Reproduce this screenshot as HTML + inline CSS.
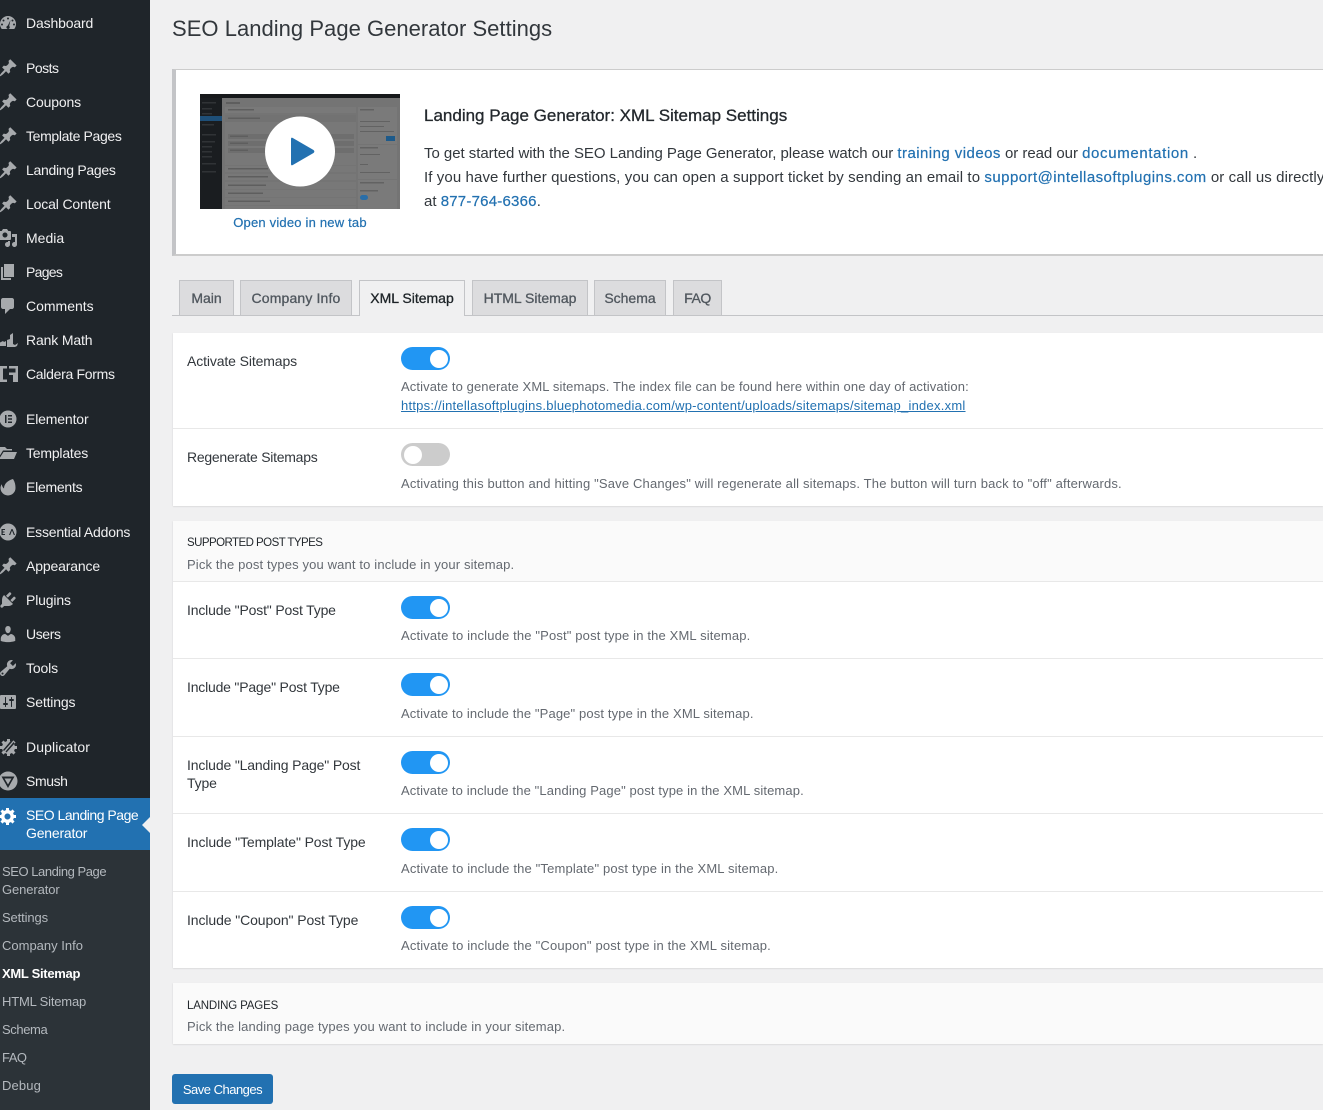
<!DOCTYPE html>
<html lang="en"><head><meta charset="utf-8"><title>SEO Landing Page Generator Settings</title>
<style>
html,body{margin:0;padding:0;width:1323px;height:1110px;overflow:hidden;background:#f0f0f1}
body{position:relative;font-family:"Liberation Sans",sans-serif;font-size:14px;color:#32373c}
.a,.t,.m,.s,.d,.l{position:absolute;white-space:nowrap}
a{color:#2271b1;text-decoration:none}
#side{position:absolute;left:0;top:0;width:150px;height:1110px;background:#1f252a;overflow:hidden}
#sub{position:absolute;left:0;top:850px;width:150px;height:260px;background:#2c3338}
#act{position:absolute;left:0;top:798px;width:150px;height:52px;background:#2271b1}
#act:after{content:"";position:absolute;right:0;top:19px;border:8px solid transparent;border-right-color:#f0f0f1;border-left:0}
.m{left:26px;height:20px;line-height:20px;color:#f0f0f1;font-size:14px;letter-spacing:-.15px}
.s{left:2px;height:18px;line-height:18px;color:#b4b9be;font-size:13px;letter-spacing:-.12px}
#side svg{position:absolute;left:-2px;width:20px;height:20px;fill:#a7aaad}
.card{position:absolute;left:173px;width:1150px;background:#fff;box-shadow:0 1px 1px rgba(0,0,0,.08),-1px 0 1px rgba(0,0,0,.03)}
.hd{background:#fafafa}
.hr{position:absolute;left:173px;width:1150px;height:1px;background:#e8e8e8}
.tab{position:absolute;top:280px;height:35px;box-sizing:border-box;background:#dcdcde;border:1px solid #c3c4c7;border-bottom:0;text-align:center;line-height:35px;color:#50575e;font-size:14px}
.tab span{-webkit-text-stroke:.3px currentColor}
.tab.on{background:#f0f0f1;color:#1d2327;height:36px}
.l{left:187px;height:18px;line-height:18px;color:#32373c;font-size:14px;letter-spacing:-.15px}
.d{left:401px;height:18px;line-height:18px;color:#646970;font-size:13px;letter-spacing:.15px}
.tg{position:absolute;left:401px;width:49px;height:23px;border-radius:12px;background:#2196f3}
.tg:after{content:"";position:absolute;left:29px;top:2.5px;width:18px;height:18px;border-radius:50%;background:#fff}
.tg.off{background:#ccc}
.tg.off:after{left:2.5px}
.p{position:absolute;left:424px;height:24px;line-height:24px;font-size:15px;color:#32373c;white-space:nowrap}
.p a{-webkit-text-stroke:.2px #2271b1;letter-spacing:.45px}
.sec{position:absolute;left:187px;height:18px;line-height:18px;font-size:11.5px;color:#23282d;white-space:nowrap}
</style></head><body>

<div id="side">
<svg style="top:13px" viewBox="0 0 20 20"><path fill-rule="evenodd" d="M3.760 16h12.480A8 8 0 0 0 18 11a8 8 0 0 0-16 0 8 8 0 0 0 1.760 5zM10 4.500a1 1 0 1 1 0 2 1 1 0 0 1 0-2zM5.500 6.500a1 1 0 1 1 0 2 1 1 0 0 1 0-2zM14.500 6.500a1 1 0 1 1 0 2 1 1 0 0 1 0-2zM4 10.500a1 1 0 1 1 0 2 1 1 0 0 1 0-2zM16 10.500a1 1 0 1 1 0 2 1 1 0 0 1 0-2zM12.500 7l-1.300 6a1.700 1.700 0 1 1-1.400-.4z"/></svg>
<div class="m" style="top:13px">Dashboard</div>
<svg style="top:58px" viewBox="0 0 20 20"><path d="M10.440 3.020l1.820-1.820 6.360 6.350-1.830 1.820c-1.050-.68-2.480-.57-3.410.36l-.75.75c-.92.93-1.040 2.350-.35 3.410l-1.830 1.820-2.410-2.410-2.800 2.790c-.42.42-3.380 2.710-3.800 2.290s1.860-3.390 2.280-3.810l2.790-2.790L4.100 9.360l1.830-1.820c1.050.69 2.480.57 3.400-.36l.75-.75c.93-.92 1.050-2.350.36-3.410z"/></svg>
<div class="m" style="top:58px;letter-spacing:-.5px">Posts</div>
<svg style="top:92px" viewBox="0 0 20 20"><path d="M10.440 3.020l1.820-1.820 6.360 6.350-1.830 1.820c-1.050-.68-2.480-.57-3.410.36l-.75.75c-.92.93-1.040 2.350-.35 3.410l-1.830 1.820-2.410-2.410-2.800 2.790c-.42.42-3.380 2.710-3.800 2.290s1.860-3.390 2.280-3.810l2.790-2.790L4.100 9.360l1.830-1.820c1.050.69 2.480.57 3.400-.36l.75-.75c.93-.92 1.050-2.350.36-3.410z"/></svg>
<div class="m" style="top:92px">Coupons</div>
<svg style="top:126px" viewBox="0 0 20 20"><path d="M10.440 3.020l1.820-1.820 6.360 6.350-1.830 1.820c-1.050-.68-2.480-.57-3.410.36l-.75.75c-.92.93-1.040 2.350-.35 3.410l-1.830 1.820-2.410-2.410-2.800 2.790c-.42.42-3.380 2.710-3.800 2.290s1.860-3.390 2.280-3.810l2.790-2.790L4.100 9.360l1.830-1.820c1.050.69 2.480.57 3.400-.36l.75-.75c.93-.92 1.050-2.350.36-3.410z"/></svg>
<div class="m" style="top:126px;letter-spacing:-.35px">Template Pages</div>
<svg style="top:160px" viewBox="0 0 20 20"><path d="M10.440 3.020l1.820-1.820 6.360 6.350-1.830 1.820c-1.050-.68-2.480-.57-3.410.36l-.75.75c-.92.93-1.040 2.350-.35 3.410l-1.830 1.820-2.410-2.410-2.800 2.790c-.42.42-3.380 2.710-3.800 2.290s1.860-3.390 2.280-3.810l2.790-2.790L4.100 9.360l1.830-1.820c1.050.69 2.480.57 3.400-.36l.75-.75c.93-.92 1.050-2.350.36-3.410z"/></svg>
<div class="m" style="top:160px;letter-spacing:-.3px">Landing Pages</div>
<svg style="top:194px" viewBox="0 0 20 20"><path d="M10.440 3.020l1.820-1.820 6.360 6.350-1.830 1.820c-1.050-.68-2.480-.57-3.410.36l-.75.75c-.92.93-1.040 2.350-.35 3.410l-1.830 1.820-2.410-2.410-2.800 2.790c-.42.42-3.380 2.710-3.800 2.290s1.860-3.390 2.280-3.810l2.790-2.790L4.100 9.360l1.830-1.820c1.050.69 2.480.57 3.400-.36l.75-.75c.93-.92 1.050-2.350.36-3.410z"/></svg>
<div class="m" style="top:194px">Local Content</div>
<svg style="top:228px" viewBox="0 0 20 20"><path fill-rule="evenodd" d="M13 11V4c0-.55-.45-1-1-1h-1.670L9 1H5L3.670 3H2c-.55 0-1 .45-1 1v7c0 .55.45 1 1 1h10c.55 0 1-.45 1-1zM7 4.500c1.380 0 2.500 1.120 2.500 2.500S8.380 9.500 7 9.500 4.500 8.380 4.500 7 5.620 4.500 7 4.500zM14 6h5v10.500c0 1.380-1.120 2.500-2.500 2.500S14 17.880 14 16.500s1.120-2.500 2.500-2.500c.17 0 .34.020.5.050V9h-3V6zm-4 8.050V13h2v3.500c0 1.380-1.120 2.500-2.500 2.500S7 17.880 7 16.500 8.120 14 9.500 14c.17 0 .34.020.5.050z"/></svg>
<div class="m" style="top:228px;letter-spacing:0">Media</div>
<svg style="top:262px" viewBox="0 0 20 20"><path d="M6 15V2h10v13H6zm-1 1h8v2H3V5h2v11z"/></svg>
<div class="m" style="top:262px;letter-spacing:-.7px">Pages</div>
<svg style="top:296px" viewBox="0 0 20 20"><path d="M5 2h9c1.100 0 2 .9 2 2v7c0 1.100-.9 2-2 2h-2l-5 5v-5H5c-1.100 0-2-.9-2-2V4c0-1.100.9-2 2-2z"/></svg>
<div class="m" style="top:296px;letter-spacing:0">Comments</div>
<svg style="top:330px" viewBox="0 0 20 20"><path d="M1 13l4-2 1 1 2-1v5H1zM9 10l3-1V5l3-2v11l2 1 3-2-1 3-2 1H9z"/></svg>
<div class="m" style="top:330px">Rank Math</div>
<svg style="top:364px;left:0" viewBox="0 0 20 20"><path d="M0 2h7v2.500H3v11h4V18H0zM9 2h9v16h-5v-7H9V8.500h6.500v-4H9z" fill-rule="evenodd"/></svg>
<div class="m" style="top:364px;letter-spacing:-.3px">Caldera Forms</div>
<svg style="top:409px" viewBox="0 0 20 20"><path fill-rule="evenodd" d="M10 1.500a8.500 8.500 0 1 0 0 17 8.500 8.500 0 0 0 0-17zM7 6h1.500v8H7zM10 6h4v1.500h-4zM10 9.250h4v1.500h-4zM10 12.500h4V14h-4z"/></svg>
<div class="m" style="top:409px">Elementor</div>
<svg style="top:443px" viewBox="0 0 20 20"><path d="M1 4h6l2 2h5v1.500H5L1 14zM5.500 9H19l-3 7H1z"/></svg>
<div class="m" style="top:443px;letter-spacing:-.2px">Templates</div>
<svg style="top:477px" viewBox="0 0 20 20"><path d="M15 2c2 3 2.500 6 2.500 9a7.500 7.500 0 0 1-15 0c0-1.500.5-2.800 1.300-3.800.2 2 1 3.300 2.200 4.300C6 7 9.500 3.500 15 2z"/></svg>
<div class="m" style="top:477px;letter-spacing:-.25px">Elements</div>
<svg style="top:522px" viewBox="0 0 20 20"><path fill-rule="evenodd" d="M10 1.500a8.500 8.500 0 1 0 0 17 8.500 8.500 0 0 0 0-17zM3.500 7H7v1H4.700v1.500H6.500v1H4.700V12H7v1H3.500zM11 13l2.500-6h1l2.500 6h-1.200l-1.800-4.500-1.800 4.500z"/></svg>
<div class="m" style="top:522px;letter-spacing:-.2px">Essential Addons</div>
<svg style="top:556px" viewBox="0 0 20 20"><path d="M10.440 3.020l1.820-1.820 6.360 6.350-1.830 1.820c-1.050-.68-2.480-.57-3.410.36l-.75.75c-.92.93-1.040 2.350-.35 3.410l-1.830 1.820-2.410-2.410-2.800 2.790c-.42.42-3.380 2.710-3.800 2.290s1.860-3.390 2.280-3.810l2.790-2.790L4.100 9.360l1.830-1.820c1.050.69 2.480.57 3.400-.36l.75-.75c.93-.92 1.050-2.350.36-3.410z"/></svg>
<div class="m" style="top:556px">Appearance</div>
<svg style="top:590px" viewBox="0 0 20 20"><path d="M13.110 4.360L9.870 7.600 8 5.730l3.240-3.240c.35-.34 1.050-.2 1.560.32.52.51.66 1.210.31 1.550zm-8 1.770l.91-1.120 9.010 9.010-1.190.84c-.71.71-2.630 1.160-3.820 1.160H6.140L4.900 17.260c-.59.59-1.540.59-2.120 0-.59-.58-.59-1.530 0-2.120l1.240-1.240v-3.880c0-1.130.4-3.190 1.090-3.890zm7.260 3.970l3.240-3.240c.34-.35 1.040-.21 1.550.31.52.51.66 1.210.31 1.550l-3.240 3.250z"/></svg>
<div class="m" style="top:590px">Plugins</div>
<svg style="top:624px" viewBox="0 0 20 20"><path d="M10 9.250c-2.270 0-2.730-3.440-2.730-3.440C7 4.020 7.820 2 9.970 2c2.160 0 2.980 2.020 2.710 3.810 0 0-.41 3.440-2.680 3.440zm0 2.570L12.720 10c2.390 0 4.520 2.330 4.520 4.530v2.490s-3.650 1.130-7.240 1.130c-3.650 0-7.240-1.130-7.240-1.130v-2.490c0-2.250 1.940-4.480 4.470-4.480z"/></svg>
<div class="m" style="top:624px;letter-spacing:-.4px">Users</div>
<svg style="top:658px" viewBox="0 0 20 20"><path fill-rule="evenodd" d="M16.680 9.770c-1.340 1.340-3.300 1.670-4.950.99l-5.410 6.520c-.99.99-2.590.99-3.580 0s-.99-2.590 0-3.570l6.520-5.420c-.68-1.650-.35-3.610.99-4.950 1.280-1.280 3.120-1.620 4.720-1.060l-2.890 2.890 2.820 2.820 2.860-2.870c.53 1.580.18 3.390-1.080 4.650zM3.810 16.210c.4.39 1.040.39 1.430 0 .4-.4.4-1.040 0-1.430-.39-.4-1.030-.4-1.430 0-.39.39-.39 1.030 0 1.430z"/></svg>
<div class="m" style="top:658px">Tools</div>
<svg style="top:692px" viewBox="0 0 20 20"><path fill-rule="evenodd" d="M18 16V4c0-.55-.45-1-1-1H3c-.55 0-1 .45-1 1v12c0 .55.45 1 1 1h14c.55 0 1-.45 1-1zM8 11h1c.55 0 1 .45 1 1s-.45 1-1 1H8v1.500c0 .28-.22.5-.5.5s-.5-.22-.5-.5V13H6c-.55 0-1-.45-1-1s.45-1 1-1h1V5.500c0-.28.22-.5.5-.5s.5.22.5.5V11zm5-2h-1c-.55 0-1-.45-1-1s.45-1 1-1h1V5.500c0-.28.22-.5.5-.5s.5.22.5.5V7h1c.55 0 1 .45 1 1s-.45 1-1 1h-1v5.500c0 .28-.22.5-.5.5s-.5-.22-.5-.5V9z"/></svg>
<div class="m" style="top:692px">Settings</div>
<svg style="top:737px;left:-1px" viewBox="0 0 20 20"><path fill-rule="evenodd" d="M18 12h-2.180c-.17.7-.44 1.350-.81 1.930l1.540 1.540-2.100 2.100-1.540-1.540c-.58.36-1.230.63-1.910.79V19H8v-2.180c-.68-.16-1.330-.43-1.910-.79l-1.540 1.540-2.120-2.120 1.540-1.540c-.36-.58-.63-1.230-.79-1.910H1V9.030h2.170c.16-.7.44-1.350.8-1.940L2.430 5.550l2.100-2.100 1.540 1.540c.58-.37 1.240-.64 1.930-.81V2h3v2.180c.68.16 1.330.43 1.910.79l1.540-1.540 2.120 2.120-1.540 1.540c.36.59.64 1.240.8 1.940H18V12zM5 14l8-9-1.500-.8L4 13zM7.500 15.500l8-9-.8-1.500-8.200 9.500z"/></svg>
<div class="m" style="top:737px;letter-spacing:.1px">Duplicator</div>
<svg style="top:771px;left:-2px" viewBox="0 0 20 20"><path fill-rule="evenodd" d="M10 .5a9.500 9.500 0 1 0 0 19 9.500 9.500 0 0 0 0-19zM3.500 5.500h13L10 17zM6.500 7.500l3.500 6 3.500-6z"/></svg>
<div class="m" style="top:771px;letter-spacing:-.4px">Smush</div>
<div id="act">
<svg style="top:8px;left:-2px;fill:#fff" viewBox="0 0 20 20"><path fill-rule="evenodd" d="M18 12h-2.180c-.17.7-.44 1.350-.81 1.930l1.540 1.540-2.100 2.100-1.540-1.540c-.58.36-1.230.63-1.910.79V19H8v-2.180c-.68-.16-1.330-.43-1.910-.79l-1.540 1.540-2.120-2.120 1.540-1.540c-.36-.58-.63-1.230-.79-1.910H1V9.030h2.170c.16-.7.44-1.350.8-1.940L2.430 5.550l2.100-2.100 1.540 1.540c.58-.37 1.240-.64 1.930-.81V2h3v2.180c.68.16 1.330.43 1.910.79l1.540-1.540 2.120 2.120-1.540 1.540c.36.59.64 1.240.8 1.940H18V12zm-8.500 1.500c1.660 0 3-1.340 3-3s-1.340-3-3-3-3 1.340-3 3 1.340 3 3 3z"/></svg>
<div class="m" style="top:8px;color:#fff;line-height:18px;height:36px;letter-spacing:-.48px">SEO Landing Page<br><span style="letter-spacing:-.2px">Generator</span></div>
</div>
<div id="sub">
<div class="s" style="top:13px;letter-spacing:-.45px">SEO Landing Page<br><span style="letter-spacing:-.1px">Generator</span></div>
<div class="s" style="top:59px">Settings</div>
<div class="s" style="top:87px;letter-spacing:0">Company Info</div>
<div class="s" style="top:115px;color:#fff;font-weight:bold;letter-spacing:-.3px">XML Sitemap</div>
<div class="s" style="top:143px;letter-spacing:-.18px">HTML Sitemap</div>
<div class="s" style="top:171px;letter-spacing:-.4px">Schema</div>
<div class="s" style="top:199px;letter-spacing:-.5px">FAQ</div>
<div class="s" style="top:227px;letter-spacing:.15px">Debug</div>
</div>
</div>

<div class="t" style="left:172px;top:14px;font-size:22px;line-height:30px;color:#32373c;letter-spacing:.03px">SEO Landing Page Generator Settings</div>

<div class="a" style="left:172px;top:69px;width:1151px;height:187px;box-sizing:border-box;background:#fff;border-left:4px solid #c3c4c7;border-top:1px solid #ccc;border-bottom:2px solid #ccc"></div>

<svg class="a" style="left:200px;top:94px" width="200" height="115" viewBox="0 0 200 115">
<rect width="200" height="115" fill="#747474"/><rect width="200" height="4" fill="#17191b"/><rect y="4" width="22" height="111" fill="#1a1d20"/>
<rect y="22" width="22" height="5" fill="#1e4f78"/>
<g fill="#303336"><rect x="2" y="8" width="14" height="1.500"/><rect x="2" y="14" width="10" height="1.500"/><rect x="2" y="19" width="10" height="1.500"/><rect x="2" y="30" width="12" height="1.500"/><rect x="2" y="40" width="14" height="1.500"/><rect x="2" y="47" width="13" height="1.500"/><rect x="2" y="52" width="10" height="1.500"/><rect x="2" y="57" width="10" height="1.500"/><rect x="2" y="62" width="10" height="1.500"/><rect x="2" y="69" width="14" height="1.500"/><rect x="2" y="77" width="14" height="1.500"/></g>
<rect x="25" y="13" width="131" height="6" fill="#797979"/>
<rect x="25" y="21" width="131" height="50" fill="#787878"/>
<rect x="25" y="21" width="131" height="7" fill="#727272"/>
<rect x="28" y="40" width="126" height="5" fill="#6e6e6e"/><rect x="28" y="47" width="126" height="5" fill="#6e6e6e"/><rect x="28" y="54" width="126" height="5" fill="#6e6e6e"/>
<g fill="#787878"><rect x="25" y="72" width="131" height="6"/><rect x="25" y="80" width="131" height="6"/><rect x="25" y="88" width="131" height="7"/><rect x="25" y="96" width="131" height="7"/><rect x="25" y="104" width="131" height="7"/><rect x="25" y="112" width="131" height="3"/></g>
<g fill="#5e5e5e"><rect x="28" y="23.500" width="32" height="1.500"/><rect x="28" y="74" width="40" height="1.500"/><rect x="28" y="82" width="40" height="1.500"/><rect x="28" y="90.500" width="38" height="1.500"/><rect x="28" y="98.500" width="35" height="1.500"/><rect x="28" y="106.500" width="42" height="1.500"/><rect x="26" y="8" width="14" height="2"/><rect x="28" y="15" width="26" height="1.500"/><rect x="30" y="41.500" width="18" height="1.500"/><rect x="30" y="48.500" width="18" height="1.500"/><rect x="30" y="55.500" width="18" height="1.500"/></g>
<rect x="158" y="13" width="39" height="37" fill="#7a7a7a"/><rect x="158" y="51" width="39" height="34" fill="#7a7a7a"/><rect x="158" y="86" width="39" height="29" fill="#7a7a7a"/>
<g fill="#626262"><rect x="160" y="15" width="14" height="1.500"/><rect x="160" y="27" width="30" height="1"/><rect x="160" y="32" width="24" height="1"/><rect x="160" y="37" width="34" height="1"/><rect x="160" y="53" width="18" height="1.500"/><rect x="160" y="60" width="20" height="1"/><rect x="160" y="70" width="8" height="1"/><rect x="160" y="78" width="30" height="1"/><rect x="160" y="88" width="24" height="1.500"/><rect x="160" y="96" width="18" height="1.500"/></g>
<rect x="186" y="42" width="9" height="5" fill="#1d5a8a"/><rect x="160" y="101" width="8" height="5" rx="2.500" fill="#2a6ea8"/>
<circle cx="100" cy="57.500" r="35" fill="#fff"/>
<path d="M91 45q0-2 1.800-1l20.700 12q1.700 1.500 0 3l-20.700 12q-1.800 1-1.800-1z" fill="#2271b1"/>
</svg>
<a class="t" style="left:200px;top:214px;width:200px;text-align:center;font-size:13px;line-height:18px;letter-spacing:.2px;-webkit-text-stroke:.2px #2271b1">Open video in new tab</a>

<div class="t" style="left:424px;top:104px;font-size:17px;line-height:24px;color:#23282d;-webkit-text-stroke:.3px #23282d">Landing Page Generator: XML Sitemap Settings</div>
<div class="p" style="top:142px;letter-spacing:-.04px">To get started with the SEO Landing Page Generator, please watch our <a>training videos</a> or read our <a style="letter-spacing:.65px">documentation</a> .</div>
<div class="p" style="top:166px;letter-spacing:.1px">If you have further questions, you can open a support ticket by sending an email to <a>support@intellasoftplugins.com</a> or call us directly</div>
<div class="p" style="top:190px">at <a style="letter-spacing:.22px">877-764-6366</a>.</div>

<div class="a" style="left:172px;top:315px;width:1151px;height:1px;background:#c3c4c7"></div>
<div class="tab" style="left:179px;width:55px"><span>Main</span></div>
<div class="tab" style="left:240px;width:112px"><span style="letter-spacing:.15px">Company Info</span></div>
<div class="tab on" style="left:359px;width:106px"><span>XML Sitemap</span></div>
<div class="tab" style="left:472px;width:116px"><span>HTML Sitemap</span></div>
<div class="tab" style="left:594px;width:72px"><span>Schema</span></div>
<div class="tab" style="left:673px;width:49px"><span style="letter-spacing:-.4px">FAQ</span></div>

<div class="card" style="top:333px;height:173px"></div>
<div class="hr" style="top:428px"></div>
<div class="l" style="top:352px;letter-spacing:-.12px">Activate Sitemaps</div>
<div class="tg" style="top:347px"></div>
<div class="d" style="top:378px;letter-spacing:.11px">Activate to generate XML sitemaps. The index file can be found here within one day of activation:</div>
<div class="d" style="top:397px;letter-spacing:.24px"><a style="text-decoration:underline">https://intellasoftplugins.bluephotomedia.com/wp-content/uploads/sitemaps/sitemap_index.xml</a></div>
<div class="l" style="top:448px;letter-spacing:-.26px">Regenerate Sitemaps</div>
<div class="tg off" style="top:443px"></div>
<div class="d" style="top:475px;letter-spacing:.17px">Activating this button and hitting "Save Changes" will regenerate all sitemaps. The button will turn back to "off" afterwards.</div>

<div class="card" style="top:521px;height:447px"></div>
<div class="a hd" style="left:173px;top:521px;width:1150px;height:60px"></div>
<div class="hr" style="top:581px"></div>
<div class="hr" style="top:658px"></div>
<div class="hr" style="top:736px"></div>
<div class="hr" style="top:813px"></div>
<div class="hr" style="top:891px"></div>
<div class="sec" style="top:534px;letter-spacing:-.55px">SUPPORTED POST TYPES</div>
<div class="sec" style="top:556px;font-size:13px;color:#646970;letter-spacing:.14px">Pick the post types you want to include in your sitemap.</div>

<div class="l" style="top:601px;letter-spacing:-.17px">Include "Post" Post Type</div>
<div class="tg" style="top:596px"></div>
<div class="d" style="top:627px">Activate to include the "Post" post type in the XML sitemap.</div>

<div class="l" style="top:678px;letter-spacing:-.2px">Include "Page" Post Type</div>
<div class="tg" style="top:673px"></div>
<div class="d" style="top:705px;letter-spacing:.13px">Activate to include the "Page" post type in the XML sitemap.</div>

<div class="l" style="top:756px;height:36px">Include "Landing Page" Post<br>Type</div>
<div class="tg" style="top:751px"></div>
<div class="d" style="top:782px;letter-spacing:.12px">Activate to include the "Landing Page" post type in the XML sitemap.</div>

<div class="l" style="top:833px;letter-spacing:-.11px">Include "Template" Post Type</div>
<div class="tg" style="top:828px"></div>
<div class="d" style="top:860px;letter-spacing:.16px">Activate to include the "Template" post type in the XML sitemap.</div>

<div class="l" style="top:911px;letter-spacing:-.1px">Include "Coupon" Post Type</div>
<div class="tg" style="top:906px"></div>
<div class="d" style="top:937px;letter-spacing:.16px">Activate to include the "Coupon" post type in the XML sitemap.</div>

<div class="card hd" style="top:983px;height:61px"></div>
<div class="sec" style="top:997px;letter-spacing:-.15px">LANDING PAGES</div>
<div class="sec" style="top:1018px;font-size:13px;color:#646970;letter-spacing:.14px">Pick the landing page types you want to include in your sitemap.</div>

<div class="a" style="left:172px;top:1074px;width:101px;height:30px;background:#2271b1;border-radius:3px;color:#fff;font-size:13px;line-height:31px;text-align:center;letter-spacing:-.5px">Save Changes</div>
</body></html>
